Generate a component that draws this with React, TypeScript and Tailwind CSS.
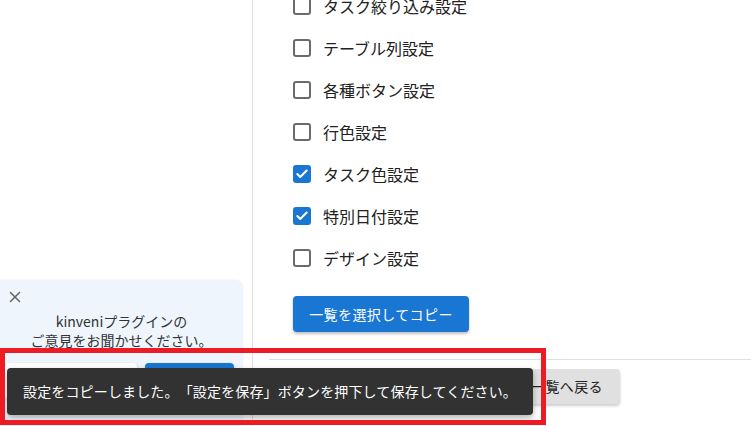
import { X, Check } from 'lucide-react';

const settings = [
  { label: 'タスク絞り込み設定', checked: false },
  { label: 'テーブル列設定', checked: false },
  { label: '各種ボタン設定', checked: false },
  { label: '行色設定', checked: false },
  { label: 'タスク色設定', checked: true },
  { label: '特別日付設定', checked: true },
  { label: 'デザイン設定', checked: false },
];

const font = "font-['Segoe_UI','Noto_Sans_CJK_JP',sans-serif]";

const CheckRow = ({ label, checked }: { label: string; checked: boolean }) => (
  <label className="flex h-[42px] items-center">
    <span
      className={`flex h-[18px] w-[18px] items-center justify-center rounded-[3px] ${
        checked ? 'bg-[#1976d2]' : 'border-2 border-[#6b6b6b] bg-white'
      }`}
    >
      {checked && <Check className="h-[14px] w-[14px] text-white" strokeWidth={3.5} />}
    </span>
    <span className="ml-[12px] text-[16px] text-[#212121]">{label}</span>
  </label>
);

const FeedbackCard = () => (
  <div className="mr-[9px] flex-1 rounded-tr-lg bg-[#eef5fd] pt-[8px] shadow-[0_0_2px_rgba(0,0,0,0.08)]">
    <div className="pl-[6px]">
      <X className="h-[18px] w-[18px] text-[#666]" strokeWidth={2} />
    </div>
    <p className="mt-[6px] text-center text-[14px] leading-[19px] text-[#333]">
      kinveniプラグインの
      <br />
      ご意見をお聞かせください。
    </p>
    <div className="mt-[13px] flex gap-[8px] pl-[5px]">
      <button className="h-[36px] w-[132px] rounded bg-white shadow-[0_1px_3px_rgba(0,0,0,0.2)]" />
      <button className="h-[36px] w-[89px] rounded bg-[#1976d2] shadow-[0_1px_3px_rgba(0,0,0,0.2)]" />
    </div>
  </div>
);

export default function App() {
  return (
    <div className={`relative flex h-[426px] w-[751px] overflow-hidden bg-white ${font}`}>
      <aside className="flex w-[253px] flex-col justify-end border-r border-[#e0e0e0] pt-[280px]">
        <FeedbackCard />
      </aside>

      <main className="flex flex-1 flex-col">
        <div className="mt-[-15px] pl-[40px]">
          {settings.map((s) => (
            <CheckRow key={s.label} label={s.label} checked={s.checked} />
          ))}
          <button className="mt-[17px] h-[36px] w-[176px] rounded bg-[#1976d2] text-[14px] tracking-[0.4px] text-white shadow-[0_2px_3px_rgba(0,0,0,0.25)]">
            一覧を選択してコピー
          </button>
        </div>

        <div className="ml-[16px] mt-[27px] border-t border-[#e0e0e0]" />

        <div className="flex pl-[262px] pt-[9px]">
          <button className="h-[35px] w-[105px] rounded bg-[#e0e0e0] pl-[16px] text-left text-[14px] tracking-[0.4px] text-[#212121] shadow-[0_2px_3px_rgba(0,0,0,0.2)]">
            一覧へ戻る
          </button>
        </div>
      </main>

      {/* snackbar */}
      <div className="absolute left-[7px] top-[368px] flex h-[47px] w-[526px] items-center rounded bg-[#323232] pl-[16px] text-[14px] tracking-[0.15px] text-white shadow-[0_3px_6px_rgba(0,0,0,0.3)] [text-spacing-trim:space-all] [font-feature-settings:'chws'_0]">
        設定をコピーしました。「設定を保存」ボタンを押下して保存してください。
      </div>

      {/* annotation */}
      <div className="pointer-events-none absolute left-0 top-[348px] h-[77px] w-[546px] border-[5px] border-[#ed1c24]" />
    </div>
  );
}
